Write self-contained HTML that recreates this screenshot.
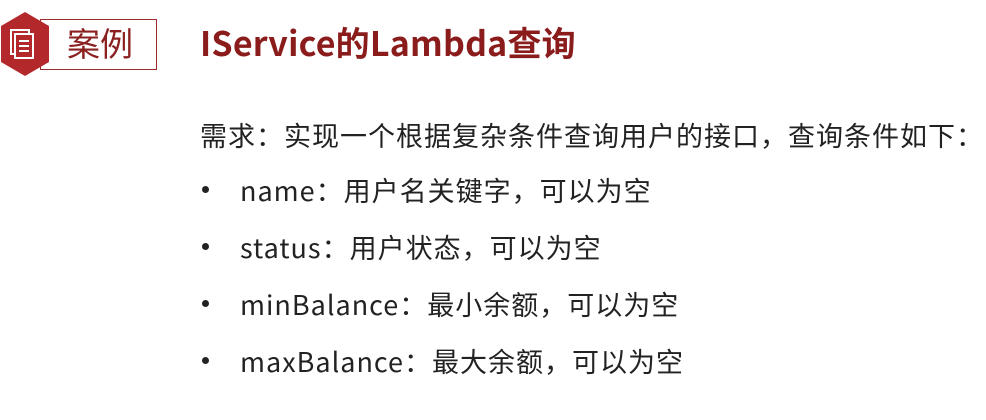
<!DOCTYPE html>
<html><head><meta charset="utf-8"><style>
body{margin:0;width:986px;height:420px;background:#fff;position:relative;overflow:hidden;font-family:"Liberation Sans","Noto Sans CJK SC",sans-serif;}
.box{position:absolute;left:40px;top:19px;width:117px;height:51px;border:1.5px solid #9b2a2a;box-sizing:border-box;}
.box span{position:absolute;left:26px;top:1px;font-size:33px;color:#8b2020;font-family:"Noto Sans CJK SC",sans-serif;line-height:1.3;}
.title{position:absolute;left:200px;top:20px;font-size:34px;font-weight:bold;color:#8b1c1c;font-family:"Noto Sans CJK SC",sans-serif;line-height:1.3;letter-spacing:0.2px;}
.t{position:absolute;font-size:27px;color:#222;font-family:"Noto Sans CJK SC",sans-serif;letter-spacing:1px;white-space:nowrap;line-height:1;}
.b{position:absolute;left:202px;width:7px;height:7px;border-radius:50%;background:#222;}
</style></head><body>
<div class="box"><span>案例</span></div>
<svg style="position:absolute;left:0;top:12px" width="50" height="64" viewBox="0 0 50 64">
<polygon points="25,0 49,14 49,50 25,64 1,50 1,14" fill="#b3282a"/>
<rect x="11" y="18" width="18" height="24" fill="none" stroke="#fff" stroke-width="2"/>
<rect x="15" y="22" width="18" height="24" fill="#b3282a" stroke="#fff" stroke-width="2"/>
<line x1="19" y1="29" x2="29" y2="29" stroke="#fff" stroke-width="2"/>
<line x1="19" y1="34" x2="29" y2="34" stroke="#fff" stroke-width="2"/>
<line x1="19" y1="39" x2="29" y2="39" stroke="#fff" stroke-width="2"/>
</svg>
<div class="title">IService的Lambda查询</div>
<div class="t" style="left:200px;top:121px">需求：实现一个根据复杂条件查询用户的接口，查询条件如下：</div>
<div class="b" style="top:186px"></div><div class="t" style="left:240px;top:176px">name：用户名关键字，可以为空</div>
<div class="b" style="top:243px"></div><div class="t" style="left:240px;top:233px">status：用户状态，可以为空</div>
<div class="b" style="top:300px"></div><div class="t" style="left:240px;top:290px">minBalance：最小余额，可以为空</div>
<div class="b" style="top:357px"></div><div class="t" style="left:240px;top:347px">maxBalance：最大余额，可以为空</div>
</body></html>
